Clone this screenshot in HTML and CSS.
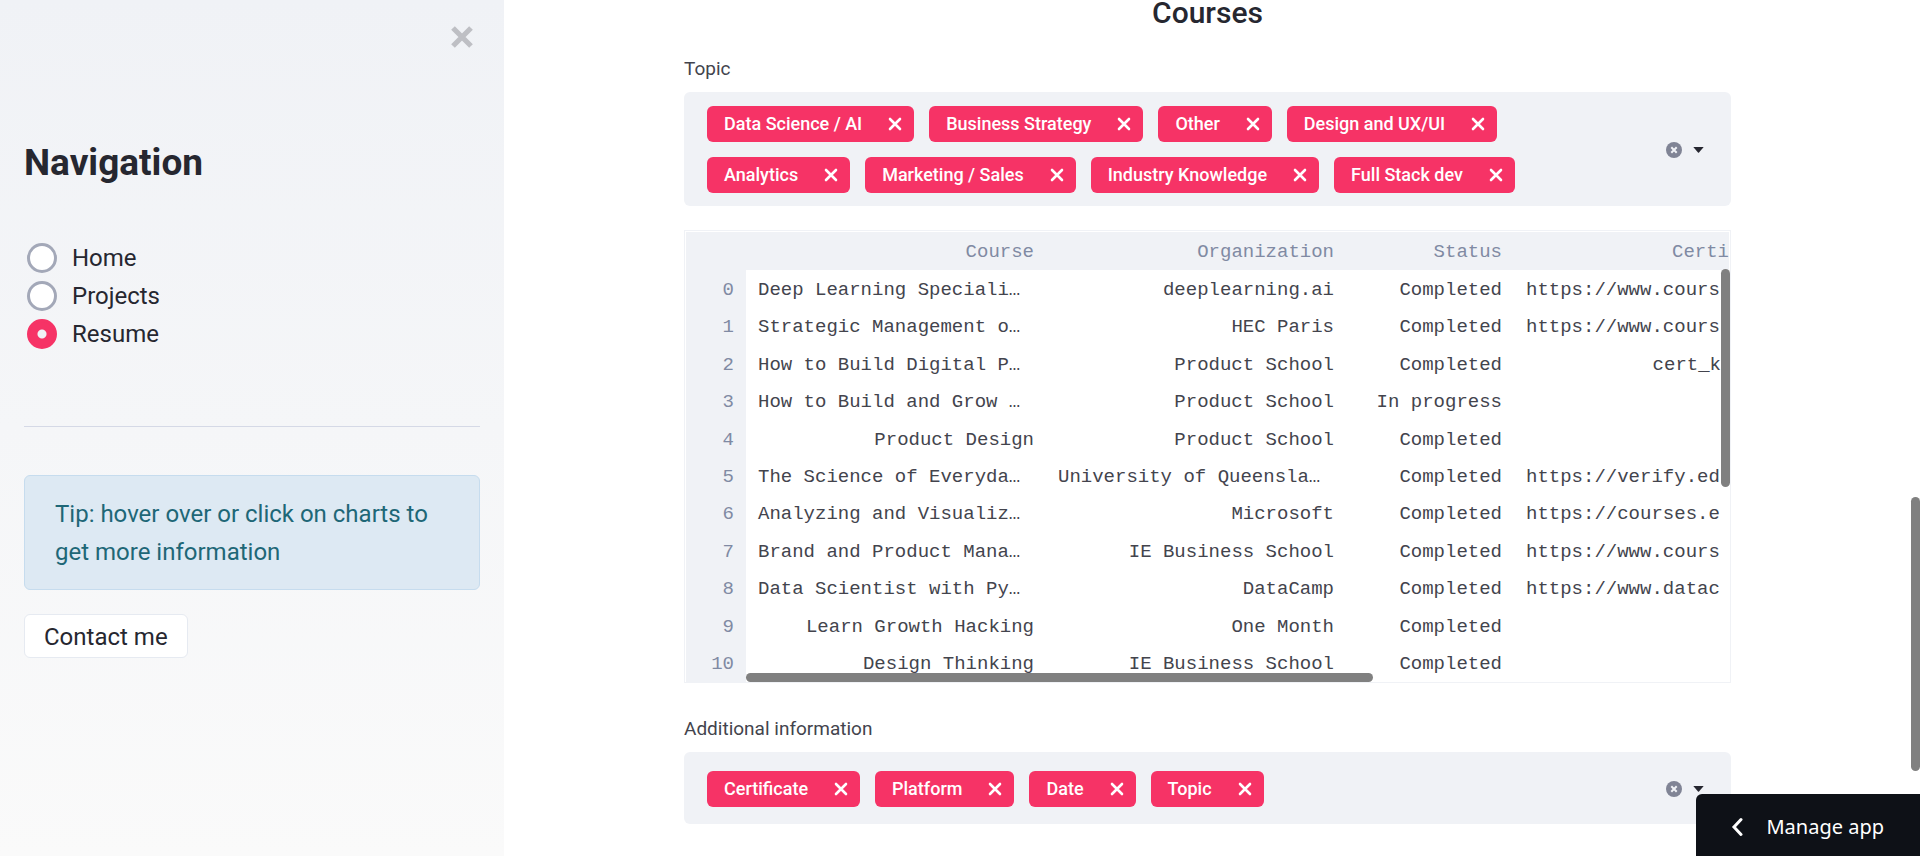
FILE: index.html
```html
<!DOCTYPE html>
<html lang="en">
<head>
<meta charset="utf-8">
<title>Resume</title>
<link rel="stylesheet" href="styles.css">
</head>
<body>
<svg width="0" height="0" class="symbols" aria-hidden="true">
  <symbol id="i-x" viewBox="0 0 14 14"><path d="M2 2l10 10M12 2L2 12" fill="none" stroke="currentColor" stroke-width="2.6" stroke-linecap="round"/></symbol>
  <symbol id="i-clear" viewBox="0 0 16 16"><circle cx="8" cy="8" r="8" fill="#808495"/><path d="M5.3 5.3l5.4 5.4M10.7 5.3l-5.4 5.4" stroke="#f0f2f6" stroke-width="2"/></symbol>
  <symbol id="i-caret" viewBox="0 0 11 6"><path d="M0.3 0h10.4L6 5.6a.8.8 0 0 1-1 0z" fill="#262730"/></symbol>
</svg>
<div class="app">
  <aside class="sidebar">
    <div class="sidebar-top">
      <button class="close" type="button" aria-label="Close sidebar"><svg width="22" height="22" viewBox="0 0 22 22"><path d="M2 2l18 18M20 2L2 20" stroke="#bebfc4" stroke-width="5.2"/></svg></button>
    </div>
    <h1 class="sidebar-title">Navigation</h1>
    <div class="radios" role="radiogroup" aria-label="Navigation">
      <label class="radio"><input type="radio" name="nav">Home</label>
      <label class="radio"><input type="radio" name="nav">Projects</label>
      <label class="radio"><input type="radio" name="nav" checked>Resume</label>
    </div>
    <hr class="divider">
    <div class="alert">Tip: hover over or click on charts to get more information</div>
    <button class="contact" type="button">Contact me</button>
  </aside>
  <main class="main">
    <div class="content">
      <h2 class="heading">Courses</h2>
      <label class="field-label" for="topic">Topic</label>
      <div class="select">
        <div class="chips">
          <span class="chip">Data Science / AI<button type="button" aria-label="Remove Data Science / AI"><svg><use href="#i-x"/></svg></button></span>
          <span class="chip">Business Strategy<button type="button" aria-label="Remove Business Strategy"><svg><use href="#i-x"/></svg></button></span>
          <span class="chip">Other<button type="button" aria-label="Remove Other"><svg><use href="#i-x"/></svg></button></span>
          <span class="chip">Design and UX/UI<button type="button" aria-label="Remove Design and UX/UI"><svg><use href="#i-x"/></svg></button></span>
          <span class="chip">Analytics<button type="button" aria-label="Remove Analytics"><svg><use href="#i-x"/></svg></button></span>
          <span class="chip">Marketing / Sales<button type="button" aria-label="Remove Marketing / Sales"><svg><use href="#i-x"/></svg></button></span>
          <span class="chip">Industry Knowledge<button type="button" aria-label="Remove Industry Knowledge"><svg><use href="#i-x"/></svg></button></span>
          <span class="chip">Full Stack dev<button type="button" aria-label="Remove Full Stack dev"><svg><use href="#i-x"/></svg></button></span>
          <input class="chip-input" id="topic" type="text">
        </div>
        <div class="select-actions">
          <button type="button" aria-label="Clear all"><svg width="16" height="16"><use href="#i-clear"/></svg></button>
          <button type="button" aria-label="Open"><svg width="11" height="6"><use href="#i-caret"/></svg></button>
        </div>
      </div>
      <div class="frame">
        <table class="grid">
          <colgroup><col class="c-index"><col class="c-wide"><col class="c-wide"><col class="c-status"><col></colgroup>
          <thead><tr><th></th><th>Course</th><th>Organization</th><th>Status</th><th>Certi</th></tr></thead>
          <tbody>
            <tr><th>0</th><td class="cut">Deep Learning Speciali…</td><td>deeplearning.ai</td><td>Completed</td><td class="cut">https://www.cours</td></tr>
            <tr><th>1</th><td class="cut">Strategic Management o…</td><td>HEC Paris</td><td>Completed</td><td class="cut">https://www.cours</td></tr>
            <tr><th>2</th><td class="cut">How to Build Digital P…</td><td>Product School</td><td>Completed</td><td>cert_k</td></tr>
            <tr><th>3</th><td class="cut">How to Build and Grow …</td><td>Product School</td><td>In progress</td><td></td></tr>
            <tr><th>4</th><td>Product Design</td><td>Product School</td><td>Completed</td><td></td></tr>
            <tr><th>5</th><td class="cut">The Science of Everyda…</td><td class="cut">University of Queensla…</td><td>Completed</td><td class="cut">https://verify.ed</td></tr>
            <tr><th>6</th><td class="cut">Analyzing and Visualiz…</td><td>Microsoft</td><td>Completed</td><td class="cut">https://courses.e</td></tr>
            <tr><th>7</th><td class="cut">Brand and Product Mana…</td><td>IE Business School</td><td>Completed</td><td class="cut">https://www.cours</td></tr>
            <tr><th>8</th><td class="cut">Data Scientist with Py…</td><td>DataCamp</td><td>Completed</td><td class="cut">https://www.datac</td></tr>
            <tr><th>9</th><td>Learn Growth Hacking</td><td>One Month</td><td>Completed</td><td></td></tr>
            <tr><th>10</th><td>Design Thinking</td><td>IE Business School</td><td>Completed</td><td></td></tr>
          </tbody>
        </table>
        <div class="bar bar-v"></div>
        <div class="bar bar-h"></div>
      </div>
      <label class="field-label" for="info">Additional information</label>
      <div class="select">
        <div class="chips">
          <span class="chip">Certificate<button type="button" aria-label="Remove Certificate"><svg><use href="#i-x"/></svg></button></span>
          <span class="chip">Platform<button type="button" aria-label="Remove Platform"><svg><use href="#i-x"/></svg></button></span>
          <span class="chip">Date<button type="button" aria-label="Remove Date"><svg><use href="#i-x"/></svg></button></span>
          <span class="chip">Topic<button type="button" aria-label="Remove Topic"><svg><use href="#i-x"/></svg></button></span>
          <input class="chip-input" id="info" type="text">
        </div>
        <div class="select-actions">
          <button type="button" aria-label="Clear all"><svg width="16" height="16"><use href="#i-clear"/></svg></button>
          <button type="button" aria-label="Open"><svg width="11" height="6"><use href="#i-caret"/></svg></button>
        </div>
      </div>
    </div>
  </main>
</div>
<div class="bar bar-page"></div>
<button class="manage" type="button"><svg width="12" height="20" viewBox="0 0 12 20"><path d="M10 2.5L3 10l7 7.5" fill="none" stroke="#fff" stroke-width="3" stroke-linecap="round"/></svg>Manage app</button>
</body>
</html>
```
FILE: styles.css
```css
* { box-sizing: border-box; }
body {
  margin: 0;
  background: #fff;
  color: #262730;
  font-family: Roboto, "Liberation Sans", sans-serif;
  font-size: 24px;
  line-height: 38px;
}
button { font: inherit; color: inherit; border: 0; background: none; padding: 0; cursor: pointer; }
button svg { display: block; }
.symbols { position: absolute; }
.app { display: flex; height: 100vh; overflow: hidden; }

.sidebar {
  flex: 0 0 504px;
  padding: 0 24px;
  background: linear-gradient(180deg, #f0f2f6, #fafafa);
}
.sidebar-top { display: flex; justify-content: flex-end; padding: 26px 7px 0 0; }
.sidebar-title { margin: 88px 0 0; font-size: 37px; line-height: 54px; font-weight: 700; }
.radios { display: flex; flex-direction: column; margin: 49px 0 0 3px; }
.radio { display: flex; align-items: center; gap: 15px; }
.radio input {
  appearance: none;
  flex: none;
  width: 30px;
  height: 30px;
  margin: 0;
  border: 3px solid #a3a8b8;
  border-radius: 50%;
  background: #fff;
}
.radio input:checked {
  border-color: #f63366;
  background: radial-gradient(circle, #f0f2f6 4px, #f63366 5px);
}
.divider { margin: 73px 0 48px; border: 0; border-top: 1px solid #d5d9e6; }
.alert {
  padding: 19px 30px 18px;
  border: 1px solid #c6dcee;
  border-radius: 6px;
  background: #dde9f3;
  color: #1e6777;
}
.contact {
  margin-top: 24px;
  padding: 3px 19px 1px;
  border: 1px solid #e6eaf1;
  border-radius: 6px;
  background: #fff;
}

.main { flex: 1; min-width: 0; padding-right: 9px; }
.content { max-width: 1095px; margin: 0 auto; padding: 0 24px; }
.heading { margin: 0; padding-bottom: 28px; font-size: 30px; line-height: 26px; font-weight: 500; text-align: center; }
.field-label { display: block; padding-bottom: 8px; color: #43444d; font-size: 19px; line-height: 30px; }
.select {
  display: flex;
  align-items: center;
  min-height: 72px;
  padding: 14px 27px 13px 23px;
  border-radius: 6px;
  background: #f0f2f6;
}
.chips { flex: 1; display: flex; flex-wrap: wrap; gap: 15px; padding-right: 96px; }
.chip {
  display: flex;
  align-items: center;
  height: 36px;
  gap: 26px;
  padding: 0 12px 0 17px;
  border-radius: 6px;
  background: #f63366;
  color: #fff;
  font-size: 18px;
  line-height: 24px;
  font-weight: 500;
}
.chip svg { width: 14px; height: 14px; }
.chip-input { width: 20px; height: 36px; border: 0; padding: 0; background: none; outline: 0; font-size: 18px; }
.select-actions { display: flex; align-items: center; gap: 11px; }

.frame {
  position: relative;
  margin: 24px 0 31px;
  padding: 1px 1px 0;
  border: 1px solid #f0f2f6;
  overflow: hidden;
}
.grid {
  width: 100%;
  height: 450px;
  table-layout: fixed;
  border-collapse: collapse;
  color: #43444d;
  font-family: "Liberation Mono", monospace;
  font-size: 19px;
  line-height: 28px;
  text-align: right;
}
.grid .c-index { width: 60px; }
.grid .c-wide { width: 300px; }
.grid .c-status { width: 168px; }
.grid th, .grid td { padding: 2px 12px 0; white-space: nowrap; overflow: hidden; }
.grid th { background: #f0f2f6; color: #808aa3; font-weight: 400; text-align: right; }
.grid thead th { height: 38px; }
.grid thead th:last-child { padding-right: 0; }
.grid td:last-child { padding-right: 8px; }
.grid .cut { text-align: left; }

.bar { position: absolute; border-radius: 5px; background: #808080; }
.bar-v { top: 38px; right: 0; width: 9px; height: 218px; }
.bar-h { left: 61px; bottom: 0; width: 60%; height: 9px; }
.bar-page { top: 497px; right: 0; width: 9px; height: 274px; }

.manage {
  position: absolute;
  right: 0;
  bottom: 0;
  display: flex;
  align-items: center;
  gap: 23px;
  height: 62px;
  padding: 4px 36px 0 35px;
  border-radius: 6px 0 0 0;
  background: #0e1117;
  color: #fff;
  font-family: "Noto Sans", sans-serif;
  font-size: 20px;
}
```
